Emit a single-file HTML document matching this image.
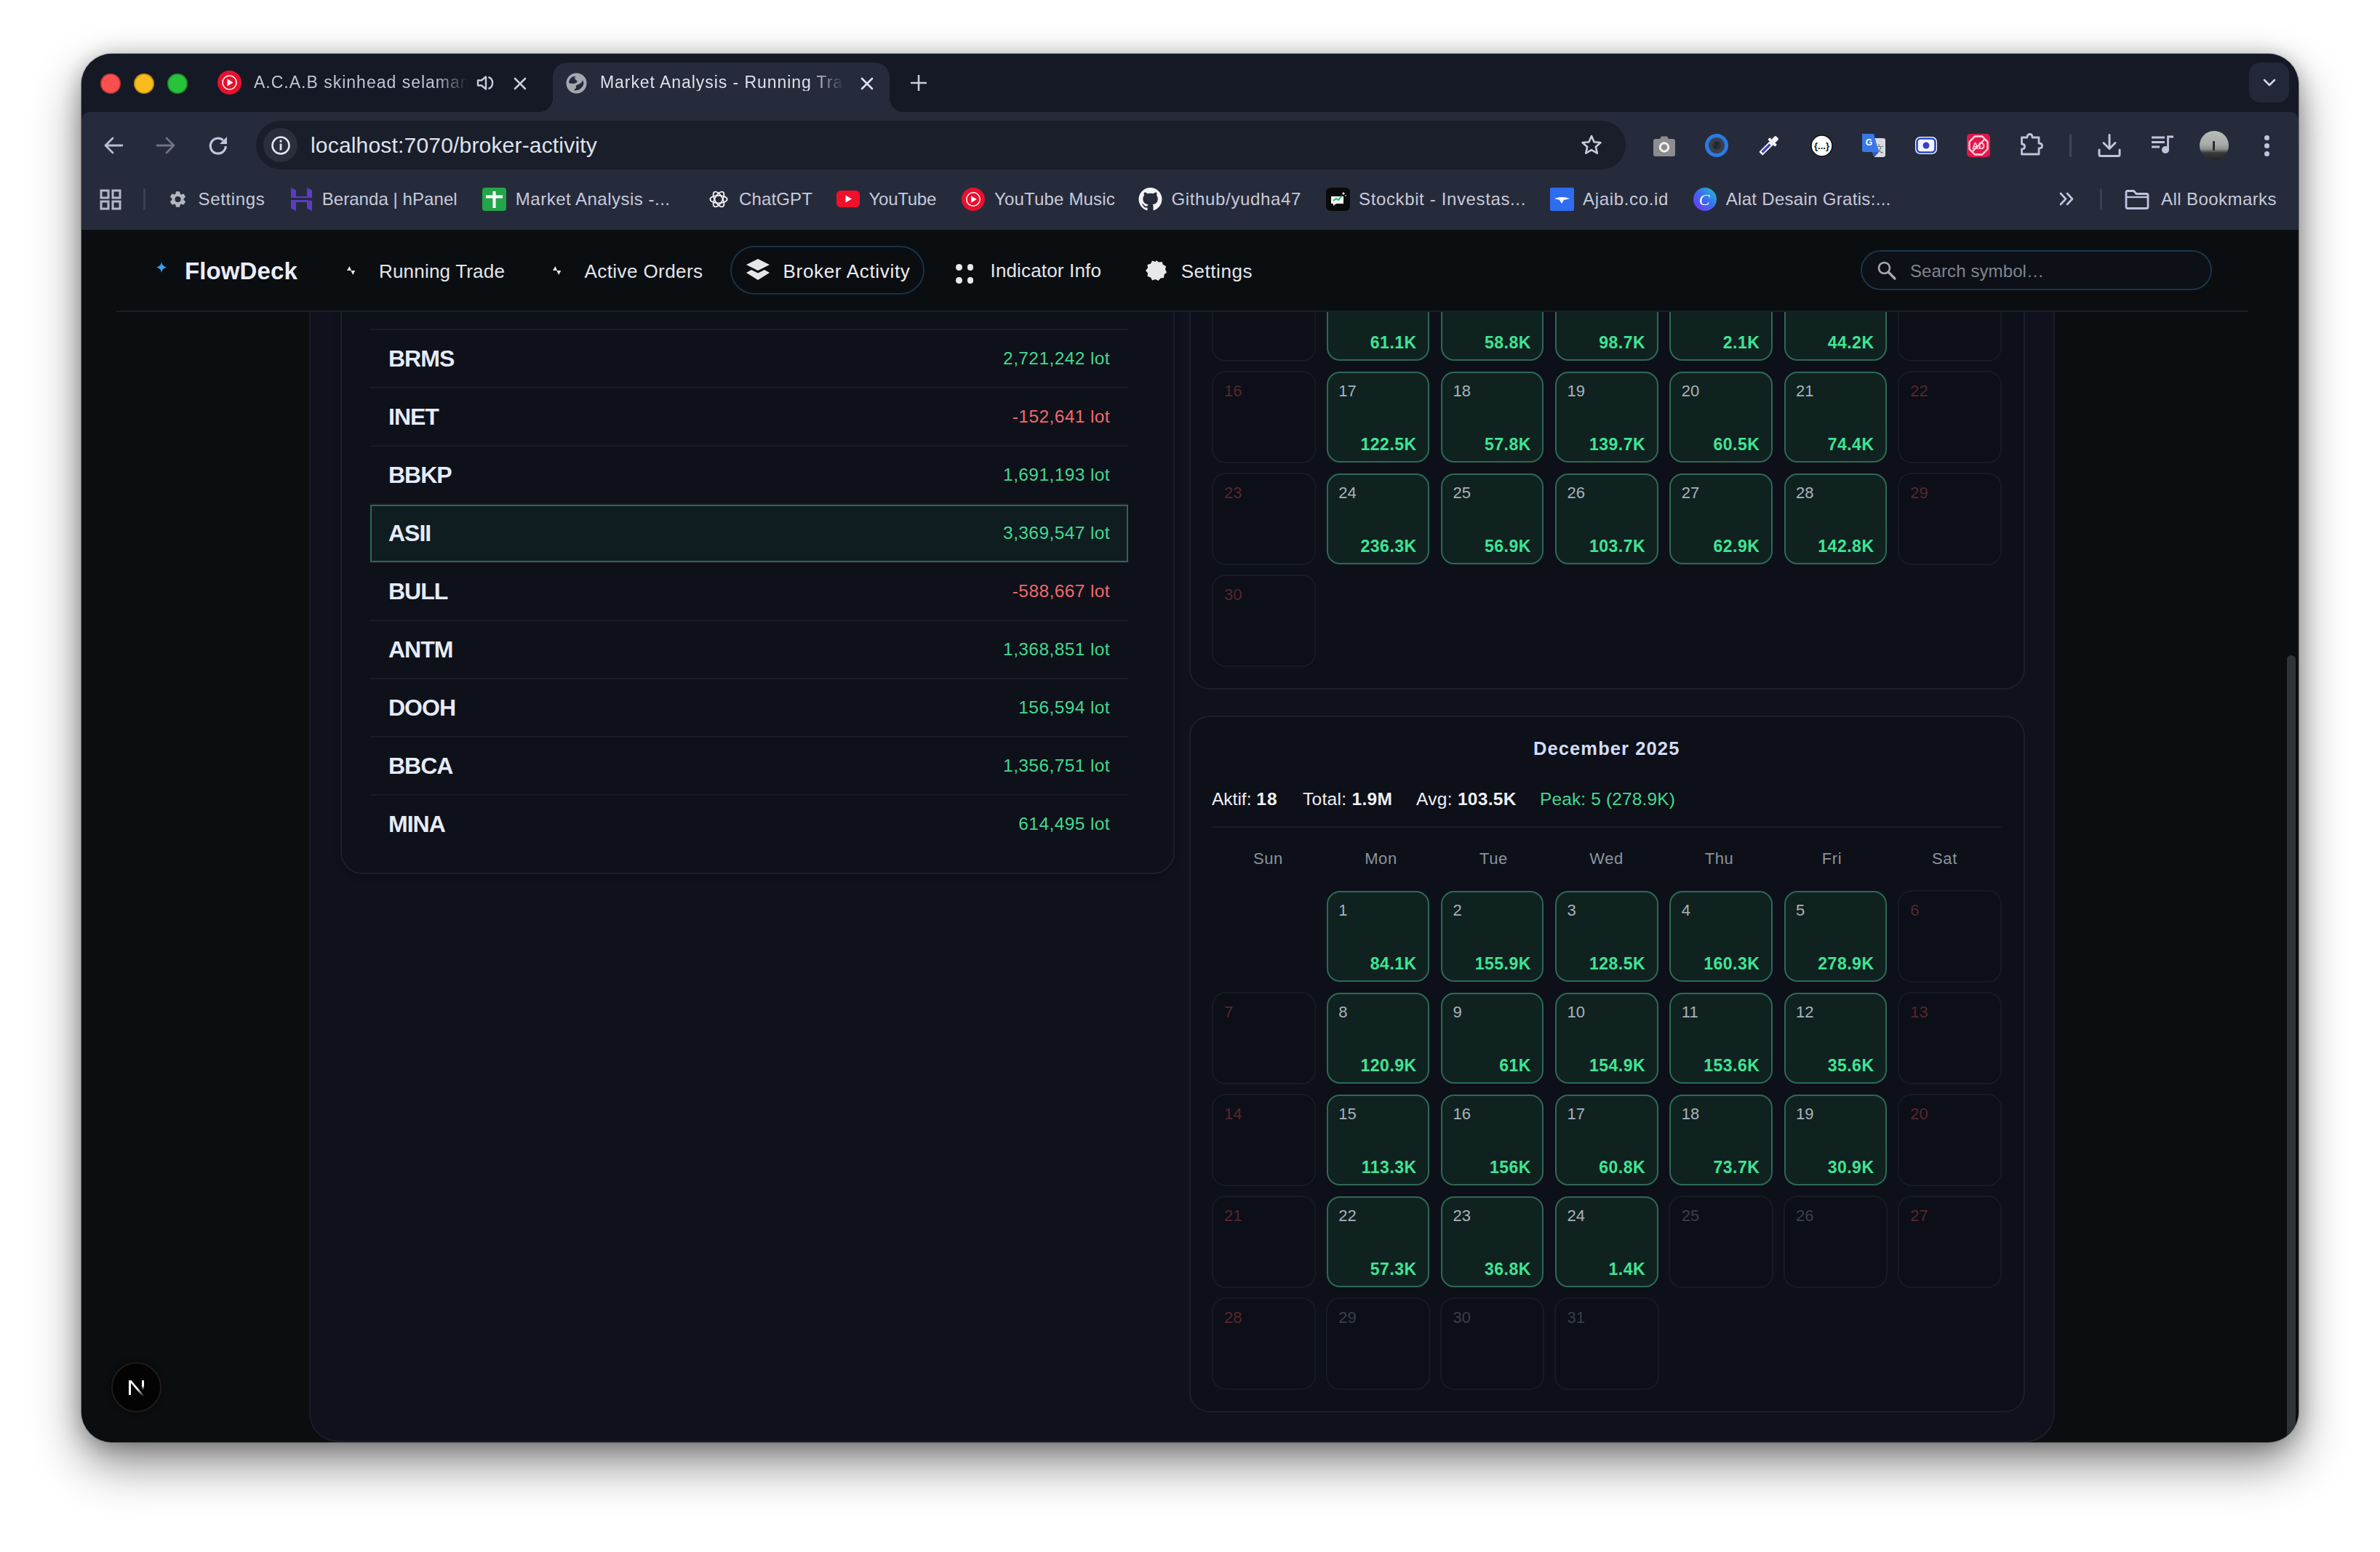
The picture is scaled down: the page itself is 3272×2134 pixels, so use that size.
<!DOCTYPE html>
<html><head><meta charset="utf-8">
<style>
*{box-sizing:border-box;margin:0;padding:0}
html,body{width:3272px;height:2134px;background:#fff;overflow:hidden;font-family:"Liberation Sans",sans-serif}
.win{position:absolute;left:112px;top:74px;width:3048px;height:1909px;border-radius:42px;overflow:hidden;background:#0b0e11;
 box-shadow:0 30px 66px rgba(0,0,0,.46),0 4px 30px rgba(0,0,0,.27),0 0 0 1px rgba(0,0,0,.3)}
.in{position:absolute;left:-112px;top:-74px;width:3272px;height:2134px}
.a{position:absolute}
.t{position:absolute;white-space:nowrap;line-height:1}
/* chrome */
.tabstrip{left:112px;top:74px;width:3048px;height:100px;background:#141925}
.toolbar{left:112px;top:154px;width:3048px;height:162px;background:#262b3b;border-radius:12px 12px 0 0}
.page{left:112px;top:316px;width:3048px;height:1667px;background:#0b0e11}
.chrtxt{color:#c6cadb;font-size:24px}
</style></head><body>
<div class="win"><div class="in">
 <div class="a tabstrip"></div>
 <div class="a toolbar"></div>
 <div class="a page"></div>
 <!--CHROME--> <!-- traffic lights -->
 <div class="a" style="left:138px;top:101px;width:28px;height:28px;border-radius:50%;background:#fe4f4f;box-shadow:inset 0 0 0 1.5px rgba(0,0,0,.3)"></div>
 <div class="a" style="left:184px;top:101px;width:28px;height:28px;border-radius:50%;background:#f8bd1c;box-shadow:inset 0 0 0 1.5px rgba(0,0,0,.3)"></div>
 <div class="a" style="left:230px;top:101px;width:28px;height:28px;border-radius:50%;background:#27c33a;box-shadow:inset 0 0 0 1.5px rgba(0,0,0,.3)"></div>
 <!-- tab 1 -->
 <svg class="a" style="left:299px;top:97px" width="33" height="33" viewBox="0 0 33 33"><circle cx="16.5" cy="16.5" r="16.5" fill="#e8112d"/><circle cx="16.5" cy="16.5" r="9.5" fill="none" stroke="#fff" stroke-width="1.6"/><path d="M13.5 11.5 L21.5 16.5 L13.5 21.5 Z" fill="#fff"/></svg>
 <div class="t" style="left:349px;top:102px;font-size:23px;color:#c0c5d8;letter-spacing:1px;width:300px;overflow:hidden;-webkit-mask-image:linear-gradient(90deg,#000 250px,transparent 295px)">A.C.A.B skinhead selaman</div>
 <svg class="a" style="left:655px;top:102px" width="26" height="24" viewBox="0 0 26 24"><path d="M2 8.5 H7 L13 3.5 V20.5 L7 15.5 H2 Z" fill="none" stroke="#c6cadb" stroke-width="2.4" stroke-linejoin="round"/><path d="M16.5 4 A8.5 8.5 0 0 1 16.5 20" fill="none" stroke="#c6cadb" stroke-width="2.4"/></svg>
 <svg class="a" style="left:706px;top:106px" width="18" height="18" viewBox="0 0 18 18"><path d="M2 2 L16 16 M16 2 L2 16" stroke="#c6cadb" stroke-width="2.6" stroke-linecap="round"/></svg>
 <!-- active tab -->
 <div class="a" style="left:760px;top:86px;width:463px;height:70px;background:#262b3b;border-radius:20px 20px 0 0"></div>
 <div class="a" style="left:740px;top:134px;width:20px;height:20px;background:radial-gradient(circle at 0 0,transparent 20px,#262b3b 20.6px)"></div>
 <div class="a" style="left:1223px;top:134px;width:20px;height:20px;background:radial-gradient(circle at 100% 0,transparent 20px,#262b3b 20.6px)"></div>
 <svg class="a" style="left:778px;top:100px" width="29" height="29" viewBox="0 0 29 29"><circle cx="14.5" cy="14.5" r="14" fill="#a3a7b0"/><path d="M4 14 Q4 6 13 4.5 Q11 8 14 10 Q17 12 14 14 Q10 16 4 14Z" fill="#262b3b"/><path d="M11 24.5 Q20 25 24 17 Q25 13 23 10.5 Q21 15 17 16 Q13 17 14 21 Q12 22 11 24.5Z" fill="#262b3b"/></svg>
 <div class="t" style="left:825px;top:102px;font-size:23px;color:#dde0ea;letter-spacing:.94px;width:340px;overflow:hidden;-webkit-mask-image:linear-gradient(90deg,#000 290px,transparent 336px)">Market Analysis - Running Trade</div>
 <svg class="a" style="left:1183px;top:106px" width="18" height="18" viewBox="0 0 18 18"><path d="M2 2 L16 16 M16 2 L2 16" stroke="#dde0ea" stroke-width="2.6" stroke-linecap="round"/></svg>
 <svg class="a" style="left:1252px;top:103px" width="22" height="22" viewBox="0 0 22 22"><path d="M11 1 V21 M1 11 H21" stroke="#c6cadb" stroke-width="2.6" stroke-linecap="round"/></svg>
 <!-- tab dropdown -->
 <div class="a" style="left:3092px;top:86px;width:55px;height:55px;border-radius:15px;background:#232838"></div>
 <svg class="a" style="left:3110px;top:107px" width="20" height="14" viewBox="0 0 20 14"><path d="M3 3 L10 10 L17 3" fill="none" stroke="#d0d3de" stroke-width="2.6" stroke-linecap="round" stroke-linejoin="round"/></svg>

 <!-- toolbar nav -->
 <svg class="a" style="left:142px;top:186px" width="28" height="28" viewBox="0 0 28 28"><path d="M26 14 H3 M13 4 L3 14 L13 24" fill="none" stroke="#b9bed0" stroke-width="2.8" stroke-linecap="round" stroke-linejoin="round"/></svg>
 <svg class="a" style="left:214px;top:186px" width="28" height="28" viewBox="0 0 28 28"><path d="M2 14 H25 M15 4 L25 14 L15 24" fill="none" stroke="#6e7385" stroke-width="2.8" stroke-linecap="round" stroke-linejoin="round"/></svg>
 <svg class="a" style="left:286px;top:186px" width="28" height="28" viewBox="0 0 28 28"><path d="M24.3 15 A10.5 10.5 0 1 1 20.8 6.8" fill="none" stroke="#c0c4dc" stroke-width="3.2"/><path d="M26 2 V12 H16 Z" fill="#c0c4dc"/></svg>
 <div class="a" style="left:352px;top:166px;width:1883px;height:67px;border-radius:34px;background:#1a1e2b"></div>
 <div class="a" style="left:362px;top:176px;width:47px;height:47px;border-radius:50%;background:#2a2f3e"></div>
 <svg class="a" style="left:372px;top:186px" width="28" height="28" viewBox="0 0 28 28"><circle cx="14" cy="14" r="11.5" fill="none" stroke="#e3e5ee" stroke-width="2.6"/><rect x="12.6" y="11.5" width="2.8" height="9" fill="#e3e5ee"/><circle cx="14" cy="8" r="1.7" fill="#e3e5ee"/></svg>
 <div class="t" style="left:427px;top:184.6px;font-size:30px;color:#dfe2ec;letter-spacing:.18px">localhost:7070/broker-activity</div>
 <svg class="a" style="left:2172px;top:184px" width="32" height="32" viewBox="0 0 32 32"><path d="M16 3 L19.6 11.2 L28.5 12 L21.8 17.9 L23.8 26.7 L16 22.1 L8.2 26.7 L10.2 17.9 L3.5 12 L12.4 11.2 Z" fill="none" stroke="#c6cadb" stroke-width="2.6" stroke-linejoin="round"/></svg>
 <!-- extensions -->
 <svg class="a" style="left:2273px;top:186px" width="30" height="29" viewBox="0 0 30 29"><path d="M9 5 L11 1.5 H19 L21 5 H27 Q30 5 30 8 V26 Q30 29 27 29 H3 Q0 29 0 26 V8 Q0 5 3 5 Z" fill="#8d8d8f"/><circle cx="15" cy="16.5" r="7.2" fill="#f2f2f2"/><circle cx="15" cy="16.5" r="4.2" fill="#8d8d8f"/></svg>
 <svg class="a" style="left:2344px;top:184px" width="32" height="32" viewBox="0 0 32 32"><circle cx="16" cy="16" r="16" fill="#2c79e6"/><circle cx="16" cy="16" r="11" fill="#3a4049"/><circle cx="16" cy="16" r="6" fill="#2b3037"/><path d="M16 11 V16 L13 19" stroke="#1a1d22" stroke-width="1.5" fill="none"/></svg>
 <svg class="a" style="left:2416px;top:184px" width="32" height="32" viewBox="0 0 32 32"><g transform="rotate(45 16 16)"><rect x="12.5" y="11" width="7" height="21" rx="1" fill="#f4f4f8"/><rect x="14.3" y="14" width="3.4" height="15.5" fill="#3b3fb8"/><rect x="9" y="7.5" width="14" height="4" rx="1" fill="#f4f4f8"/><rect x="12.5" y="0" width="7" height="8" rx="2" fill="#f4f4f8"/></g></svg>
 <svg class="a" style="left:2489px;top:185px" width="31" height="31" viewBox="0 0 31 31"><circle cx="15.5" cy="15.5" r="14.5" fill="#fff" stroke="#111" stroke-width="1.6"/><text x="15.5" y="20" font-family="Liberation Sans" font-size="13" font-weight="bold" text-anchor="middle" fill="#111">{...}</text></svg>
 <svg class="a" style="left:2560px;top:184px" width="33" height="32" viewBox="0 0 33 32"><path d="M14 6 H29 Q32 6 32 9 V29 Q32 32 29 32 H17 L14 25 Z" fill="#dadce2"/><text x="23.5" y="25" font-family="Liberation Sans" font-size="13" fill="#6b6f7a" text-anchor="middle">文</text><path d="M0 0 H16 L23 25 H2 Q0 25 0 23 Z" fill="#3b78e7"/><text x="9.5" y="16" font-family="Liberation Sans" font-size="12" font-weight="bold" fill="#fff" text-anchor="middle">G</text><path d="M14 25 L17 32 L23 25 Z" fill="#2e5dbb"/></svg>
 <svg class="a" style="left:2632px;top:187px" width="32" height="26" viewBox="0 0 32 26"><rect x="1" y="1" width="30" height="24" rx="7" fill="#fff"/><rect x="3.5" y="3.5" width="25" height="19" rx="5" fill="#f4f6ff" stroke="#2447c2" stroke-width="2.6"/><circle cx="16" cy="13" r="4.5" fill="#3b3fc4"/></svg>
 <svg class="a" style="left:2704px;top:184px" width="32" height="32" viewBox="0 0 32 32"><rect width="32" height="32" rx="5" fill="#e3174a"/><path d="M11 3.5 H21 L28.5 11 V21 L21 28.5 H11 L3.5 21 V11 Z" fill="none" stroke="#ffd6e2" stroke-width="2.3"/><text x="16" y="20.5" font-family="Liberation Sans" font-size="12" font-weight="bold" fill="#ffd6e2" text-anchor="middle">AD</text><path d="M24 8 L8 24" stroke="#ffd6e2" stroke-width="2.3"/></svg>
 <svg class="a" style="left:2777px;top:182px" width="34" height="32" viewBox="0 0 34 32"><path d="M2.5 7 H10 Q10 2.5 13.5 2.5 Q17 2.5 17 7 H26 V15 Q30.5 15 30.5 18.5 Q30.5 22 26 22 V30 H2.5 V23 Q6.5 23 6.5 19.5 Q6.5 16 2.5 16 Z" fill="none" stroke="#bfc3dc" stroke-width="2.8" stroke-linejoin="round"/></svg>
 <div class="a" style="left:2845px;top:184px;width:3px;height:32px;background:#3e4456;border-radius:2px"></div>
 <svg class="a" style="left:2884px;top:184px" width="32" height="32" viewBox="0 0 32 32"><path d="M16 1.5 V20 M8 12.5 L16 20.5 L24 12.5" fill="none" stroke="#c0c4dc" stroke-width="3" stroke-linecap="round" stroke-linejoin="round"/><path d="M2 22 V28.5 Q2 30.5 4 30.5 H28 Q30 30.5 30 28.5 V22" fill="none" stroke="#c0c4dc" stroke-width="3" stroke-linecap="round"/></svg>
 <svg class="a" style="left:2957px;top:186px" width="32" height="26" viewBox="0 0 32 26"><path d="M1 3 H19 M1 9.5 H19 M1 16 H12" stroke="#c0c4dc" stroke-width="2.8"/><path d="M23.5 20 V2 H31" stroke="#c0c4dc" stroke-width="2.8" fill="none"/><circle cx="20" cy="20" r="5" fill="#c0c4dc"/></svg>
 <div class="a" style="left:3024px;top:180px;width:40px;height:40px;border-radius:50%;background:linear-gradient(180deg,#b9bdba 0%,#a7aca9 45%,#8e9390 62%,#3a3c3b 75%,#222423 100%)"></div>
 <div class="a" style="left:3042px;top:194px;width:3px;height:13px;background:#2a2a2a;border-radius:1px"></div>
 <div class="a" style="left:3112.5px;top:185.5px;width:7px;height:7px;border-radius:50%;background:#c0c4dc"></div>
 <div class="a" style="left:3112.5px;top:196.5px;width:7px;height:7px;border-radius:50%;background:#c0c4dc"></div>
 <div class="a" style="left:3112.5px;top:208px;width:7px;height:7px;border-radius:50%;background:#c0c4dc"></div>

 <!-- bookmarks -->
 <svg class="a" style="left:137px;top:260px" width="30" height="29" viewBox="0 0 30 29"><path d="M2 2 H12 V12 H2 Z M18 2 H28 V12 H18 Z M2 17 H12 V27 H2 Z M18 17 H28 V27 H18 Z" fill="none" stroke="#b3b7c6" stroke-width="3"/></svg>
 <div class="a" style="left:196.5px;top:259px;width:3px;height:30px;background:#3a4052;border-radius:2px"></div>
 <svg class="a" style="left:231px;top:260px" width="27" height="28" viewBox="0 0 24 24"><path fill="#b3b6c0" d="M19.14 12.94c.04-.3.06-.61.06-.94 0-.32-.02-.64-.07-.94l2.03-1.58a.49.49 0 0 0 .12-.61l-1.92-3.32a.49.49 0 0 0-.59-.22l-2.39.96c-.5-.38-1.03-.7-1.62-.94l-.36-2.54a.48.48 0 0 0-.48-.41h-3.84c-.24 0-.43.17-.47.41l-.36 2.54c-.59.24-1.13.57-1.62.94l-2.39-.96a.48.48 0 0 0-.59.22L2.74 8.87a.47.47 0 0 0 .12.61l2.03 1.58c-.05.3-.09.63-.09.94s.02.64.07.94l-2.03 1.58a.49.49 0 0 0-.12.61l1.92 3.32c.12.22.37.29.59.22l2.39-.96c.5.38 1.03.7 1.62.94l.36 2.54c.05.24.24.41.48.41h3.84c.24 0 .44-.17.47-.41l.36-2.54c.59-.24 1.13-.56 1.62-.94l2.39.96c.22.08.47 0 .59-.22l1.92-3.32c.12-.22.07-.47-.12-.61l-2.01-1.58zM12 15.6A3.6 3.6 0 1 1 12 8.4a3.6 3.6 0 0 1 0 7.2z"/></svg>
 <div class="t chrtxt" style="left:272.5px;top:261.7px;letter-spacing:.66px">Settings</div>
 <svg class="a" style="left:400px;top:258px" width="29" height="32" viewBox="0 0 29 32"><path d="M0 0 L7 3.5 V12 L22 12 V0 L29 3.5 V14 L7 14 H0 Z M0 17 H22 L29 18 V32 L22 28.5 V20 L7 20 V32 L0 28.5 Z" fill="#5b3cc4"/></svg>
 <div class="t chrtxt" style="left:442.7px;top:261.7px;letter-spacing:.06px">Beranda | hPanel</div>
 <svg class="a" style="left:663px;top:258px" width="33" height="32" viewBox="0 0 33 32"><rect width="33" height="32" rx="4" fill="#23a549"/><path d="M16.5 5 V28 M5 12.5 H28" stroke="#fff" stroke-width="4"/></svg>
 <div class="t chrtxt" style="left:708.8px;top:261.7px;letter-spacing:.5px">Market Analysis -...</div>
 <svg class="a" style="left:974px;top:260px" width="28" height="28" viewBox="0 0 24 24"><g fill="none" stroke="#f2f2f2" stroke-width="1.5"><ellipse cx="12" cy="12" rx="10" ry="4.5"/><ellipse cx="12" cy="12" rx="10" ry="4.5" transform="rotate(60 12 12)"/><ellipse cx="12" cy="12" rx="10" ry="4.5" transform="rotate(120 12 12)"/></g></svg>
 <div class="t chrtxt" style="left:1016px;top:261.7px;letter-spacing:.14px">ChatGPT</div>
 <svg class="a" style="left:1150px;top:262px" width="32" height="23" viewBox="0 0 32 23"><rect width="32" height="23" rx="5.5" fill="#f0102b"/><path d="M12.5 6.5 L21 11.5 L12.5 16.5 Z" fill="#fff"/></svg>
 <div class="t chrtxt" style="left:1194.5px;top:261.7px;letter-spacing:-.26px">YouTube</div>
 <svg class="a" style="left:1322px;top:258px" width="32" height="32" viewBox="0 0 33 33"><circle cx="16.5" cy="16.5" r="16.5" fill="#e8112d"/><circle cx="16.5" cy="16.5" r="9.5" fill="none" stroke="#fff" stroke-width="1.6"/><path d="M13.5 11.5 L21.5 16.5 L13.5 21.5 Z" fill="#fff"/></svg>
 <div class="t chrtxt" style="left:1367px;top:261.7px;letter-spacing:.18px">YouTube Music</div>
 <svg class="a" style="left:1565px;top:258px" width="33" height="32" viewBox="0 0 16 16"><path fill="#f2f2f2" d="M8 0C3.58 0 0 3.58 0 8c0 3.54 2.29 6.53 5.47 7.59.4.07.55-.17.55-.38 0-.19-.01-.82-.01-1.49-2.01.37-2.53-.49-2.69-.94-.09-.23-.48-.94-.82-1.13-.28-.15-.68-.52-.01-.53.63-.01 1.08.58 1.23.82.72 1.21 1.87.87 2.33.66.07-.52.28-.87.51-1.07-1.78-.2-3.64-.89-3.64-3.95 0-.87.31-1.59.82-2.15-.08-.2-.36-1.02.08-2.12 0 0 .67-.21 2.2.82.64-.18 1.32-.27 2-.27.68 0 1.36.09 2 .27 1.53-1.04 2.2-.82 2.2-.82.44 1.1.16 1.92.08 2.12.51.56.82 1.27.82 2.15 0 3.07-1.87 3.75-3.65 3.95.29.25.54.73.54 1.48 0 1.07-.01 1.93-.01 2.2 0 .21.15.46.55.38A8.013 8.013 0 0 0 16 8c0-4.42-3.58-8-8-8z"/></svg>
 <div class="t chrtxt" style="left:1610.5px;top:261.7px;letter-spacing:.65px">Github/yudha47</div>
 <svg class="a" style="left:1823px;top:258px" width="33" height="32" viewBox="0 0 33 32"><rect width="33" height="32" rx="6" fill="#0a0a0a"/><path d="M7 12 H24 V22 H14 L10 25 V22 H7 Z" fill="#f4f4f4"/><path d="M10 18 L14 15 L17 17 L22 11" stroke="#19b36b" stroke-width="1.8" fill="none"/><circle cx="24" cy="8" r="1.5" fill="#fff"/><circle cx="27" cy="11" r="1.2" fill="#2ad"/></svg>
 <div class="t chrtxt" style="left:1868px;top:261.7px;letter-spacing:.63px">Stockbit - Investas...</div>
 <svg class="a" style="left:2131px;top:258px" width="33" height="32" viewBox="0 0 33 32"><rect width="33" height="32" rx="2" fill="#2f6df0"/><path d="M6 15 Q16 11 27 15 Q16 19 6 15 Z" fill="#fff"/><path d="M13 17 L16 22 L19 17" fill="#fff"/></svg>
 <div class="t chrtxt" style="left:2176px;top:261.7px;letter-spacing:.66px">Ajaib.co.id</div>
 <svg class="a" style="left:2328px;top:258px" width="32" height="32" viewBox="0 0 32 32"><defs><linearGradient id="cg" x1="0" y1="1" x2="1" y2="0"><stop offset="0" stop-color="#7b2ff2"/><stop offset=".5" stop-color="#3a6cf0"/><stop offset="1" stop-color="#1fc3d3"/></linearGradient></defs><circle cx="16" cy="16" r="16" fill="url(#cg)"/><text x="15" y="24" font-family="Liberation Serif" font-style="italic" font-size="22" fill="#fff" text-anchor="middle">C</text></svg>
 <div class="t chrtxt" style="left:2372.7px;top:261.7px;letter-spacing:.31px">Alat Desain Gratis:...</div>
 <svg class="a" style="left:2831px;top:264px" width="21" height="19" viewBox="0 0 21 19"><path d="M2 2 L9 9.5 L2 17 M11 2 L18 9.5 L11 17" fill="none" stroke="#c0c4dc" stroke-width="2.6" stroke-linecap="round" stroke-linejoin="round"/></svg>
 <div class="a" style="left:2887px;top:259px;width:3px;height:30px;background:#3a4052;border-radius:2px"></div>
 <svg class="a" style="left:2921px;top:261px" width="34" height="27" viewBox="0 0 34 27"><path d="M2 3.5 Q2 1.5 4 1.5 H12.5 L16 5.5 H30 Q32 5.5 32 7.5 V23.5 Q32 25.5 30 25.5 H4 Q2 25.5 2 23.5 Z" fill="none" stroke="#c0c4dc" stroke-width="2.8" stroke-linejoin="round"/><path d="M2 10 H32" stroke="#c0c4dc" stroke-width="2.4"/></svg>
 <div class="t chrtxt" style="left:2971px;top:261.7px;letter-spacing:.43px">All Bookmarks</div>
<!--/CHROME-->
 <!--PAGE--><div class="a" style="left:160px;top:427px;width:2930px;height:2px;background:#1a1f2b"></div>
<svg class="a" style="left:215px;top:360px" width="14" height="15" viewBox="0 0 14 15"><path d="M7 0 Q7.8 6.2 14 7.5 Q7.8 8.8 7 15 Q6.2 8.8 0 7.5 Q6.2 6.2 7 0Z" fill="#3b9ff0"/></svg>
<div class="t" style="left:254px;top:356.1px;font-size:33px;font-weight:bold;color:#e9edfb;letter-spacing:.1px">FlowDeck</div>
<svg class="a" style="left:476px;top:365px" width="13" height="14" viewBox="0 0 13 14"><path d="M1 7 L4.5 1 L7 7 Z M6.2 7 L12.3 7 L9.2 13 Z" fill="#e4e6ec"/></svg>
<div class="t" style="left:521px;top:360.0px;font-size:26px;color:#e4e6ec;letter-spacing:.19px">Running Trade</div>
<svg class="a" style="left:759px;top:365px" width="13" height="14" viewBox="0 0 13 14"><path d="M1 7 L4.5 1 L7 7 Z M6.2 7 L12.3 7 L9.2 13 Z" fill="#e4e6ec"/></svg>
<div class="t" style="left:803.5px;top:360.0px;font-size:26px;color:#e4e6ec;letter-spacing:.42px">Active Orders</div>
<div class="a" style="left:1004px;top:338px;width:267px;height:67px;border-radius:34px;border:2px solid #1b3144;background:#0b0e11"></div>
<svg class="a" style="left:1025px;top:356px" width="34" height="30" viewBox="0 0 34 30"><path d="M17 0 L33 8 L17 16 L1 8 Z" fill="#e6e6e8"/><path d="M8 15 L17 19.5 L26 15 L33 19 L17 29 L1 19 Z" fill="#e6e6e8"/></svg>
<div class="t" style="left:1076.5px;top:360.0px;font-size:26px;color:#eceef3;letter-spacing:.69px">Broker Activity</div>
<div class="a" style="left:1314.2px;top:363.0px;width:8.6px;height:8.6px;border-radius:50%;background:#e8e9ee"></div>
<div class="a" style="left:1314.2px;top:381.1px;width:8.6px;height:8.6px;border-radius:50%;background:#e8e9ee"></div>
<div class="a" style="left:1329.5px;top:363.0px;width:8.6px;height:8.6px;border-radius:50%;background:#e8e9ee"></div>
<div class="a" style="left:1329.5px;top:381.1px;width:8.6px;height:8.6px;border-radius:50%;background:#e8e9ee"></div>
<div class="t" style="left:1361.5px;top:359.0px;font-size:26px;color:#e4e6ec;letter-spacing:.16px">Indicator Info</div>
<svg class="a" style="left:1574px;top:357px" width="31" height="30" viewBox="0 0 31 30"><path d="M15.5 1 L19 3.5 L23.5 3 L25 7 L29 9 L28 13.5 L30 17.5 L26.5 20.5 L26 25 L21.5 25.5 L18.5 29 L14.5 27 L10 28.5 L8 24.5 L3.5 23 L4 18.5 L1 15 L4 11.5 L3.5 7 L8 5.5 L10 1.5 L14.5 3 Z" fill="#e8e8ea"/></svg>
<div class="t" style="left:1623.7px;top:360.0px;font-size:26px;color:#e4e6ec;letter-spacing:.54px">Settings</div>
<div class="a" style="left:2558px;top:344px;width:483px;height:55px;border-radius:28px;border:2px solid #1c3448;background:#0d1017"></div>
<svg class="a" style="left:2580px;top:358px" width="28" height="28" viewBox="0 0 28 28"><circle cx="10.5" cy="10.5" r="7.5" fill="none" stroke="#a6aab5" stroke-width="2.6"/><path d="M16 16 L25 25" stroke="#a6aab5" stroke-width="3.2" stroke-linecap="round"/></svg>
<div class="t" style="left:2626px;top:360.7px;font-size:24px;color:#80858f;letter-spacing:.1px">Search symbol…</div>
<div class="a" style="left:112px;top:429px;width:3048px;height:1554px;overflow:hidden">
<div class="a" style="left:-112px;top:-429px;width:3272px;height:2134px">
<div class="a" style="left:425px;top:100px;width:2400px;height:1883px;background:#0f121c;border:2px solid #1a1e28;border-radius:40px"></div>
<div class="a" style="left:468px;top:120px;width:1147px;height:1082px;background:#0e1119;border:2px solid #1b1f2a;border-radius:30px;box-shadow:0 4px 10px rgba(0,0,0,.25)"></div>
<div class="a" style="left:508px;top:452px;width:1043px;height:2px;background:#181c26"></div>
<div class="a" style="left:508px;top:532px;width:1043px;height:2px;background:#181c26"></div>
<div class="a" style="left:508px;top:612px;width:1043px;height:2px;background:#181c26"></div>
<div class="a" style="left:508px;top:692px;width:1043px;height:2px;background:#181c26"></div>
<div class="a" style="left:508px;top:772px;width:1043px;height:2px;background:#181c26"></div>
<div class="a" style="left:508px;top:852px;width:1043px;height:2px;background:#181c26"></div>
<div class="a" style="left:508px;top:932px;width:1043px;height:2px;background:#181c26"></div>
<div class="a" style="left:508px;top:1012px;width:1043px;height:2px;background:#181c26"></div>
<div class="a" style="left:508px;top:1092px;width:1043px;height:2px;background:#181c26"></div>
<div class="t" style="left:534px;top:477.1px;font-size:32px;font-weight:bold;color:#e6ebf8;letter-spacing:-1px">BRMS</div>
<div class="t" style="right:1746px;top:480.8px;font-size:24.5px;color:#42d890;letter-spacing:.4px">2,721,242 lot</div>
<div class="t" style="left:534px;top:557.1px;font-size:32px;font-weight:bold;color:#e6ebf8;letter-spacing:-1px">INET</div>
<div class="t" style="right:1746px;top:560.8px;font-size:24.5px;color:#f2686d;letter-spacing:.4px">-152,641 lot</div>
<div class="t" style="left:534px;top:637.1px;font-size:32px;font-weight:bold;color:#e6ebf8;letter-spacing:-1px">BBKP</div>
<div class="t" style="right:1746px;top:640.8px;font-size:24.5px;color:#42d890;letter-spacing:.4px">1,691,193 lot</div>
<div class="a" style="left:509px;top:694px;width:1042px;height:79px;border:2px solid #2c6654;background:#0f1d21"></div>
<div class="t" style="left:534px;top:717.1px;font-size:32px;font-weight:bold;color:#e6ebf8;letter-spacing:-1px">ASII</div>
<div class="t" style="right:1746px;top:720.8px;font-size:24.5px;color:#42d890;letter-spacing:.4px">3,369,547 lot</div>
<div class="t" style="left:534px;top:797.1px;font-size:32px;font-weight:bold;color:#e6ebf8;letter-spacing:-1px">BULL</div>
<div class="t" style="right:1746px;top:800.8px;font-size:24.5px;color:#f2686d;letter-spacing:.4px">-588,667 lot</div>
<div class="t" style="left:534px;top:877.1px;font-size:32px;font-weight:bold;color:#e6ebf8;letter-spacing:-1px">ANTM</div>
<div class="t" style="right:1746px;top:880.8px;font-size:24.5px;color:#42d890;letter-spacing:.4px">1,368,851 lot</div>
<div class="t" style="left:534px;top:957.1px;font-size:32px;font-weight:bold;color:#e6ebf8;letter-spacing:-1px">DOOH</div>
<div class="t" style="right:1746px;top:960.8px;font-size:24.5px;color:#42d890;letter-spacing:.4px">156,594 lot</div>
<div class="t" style="left:534px;top:1037.1px;font-size:32px;font-weight:bold;color:#e6ebf8;letter-spacing:-1px">BBCA</div>
<div class="t" style="right:1746px;top:1040.8px;font-size:24.5px;color:#42d890;letter-spacing:.4px">1,356,751 lot</div>
<div class="t" style="left:534px;top:1117.1px;font-size:32px;font-weight:bold;color:#e6ebf8;letter-spacing:-1px">MINA</div>
<div class="t" style="right:1746px;top:1120.8px;font-size:24.5px;color:#42d890;letter-spacing:.4px">614,495 lot</div>
<div class="a" style="left:1635px;top:-150px;width:1148.5px;height:1097.5px;background:#0d1018;border:2px solid #1b1f2a;border-radius:28px"></div>
<div class="a" style="left:2608.7px;top:90px;width:143.5px;height:127px;border-radius:19px;border:2px solid #161a23;background:#0c0f17"></div>
<div class="t" style="left:2626.2px;top:106.6px;font-size:22px;color:#57272d">1</div>
<div class="a" style="left:1665.5px;top:230px;width:143.5px;height:127px;border-radius:19px;border:2px solid #161a23;background:#0c0f17"></div>
<div class="t" style="left:1683.0px;top:246.6px;font-size:22px;color:#57272d">2</div>
<div class="a" style="left:1823.7px;top:231px;width:141.5px;height:125px;border-radius:18px;border:2.5px solid #2c6956;background:#10221f"></div>
<div class="t" style="left:1840.2px;top:246.6px;font-size:22px;color:#a9b2bb">3</div>
<div class="t" style="right:1324.3px;top:319.5px;font-size:23px;font-weight:bold;color:#3fe495;letter-spacing:.5px">1K</div>
<div class="a" style="left:1980.9px;top:231px;width:141.5px;height:125px;border-radius:18px;border:2.5px solid #2c6956;background:#10221f"></div>
<div class="t" style="left:1997.4px;top:246.6px;font-size:22px;color:#a9b2bb">4</div>
<div class="t" style="right:1167.1px;top:319.5px;font-size:23px;font-weight:bold;color:#3fe495;letter-spacing:.5px">1K</div>
<div class="a" style="left:2138.1px;top:231px;width:141.5px;height:125px;border-radius:18px;border:2.5px solid #2c6956;background:#10221f"></div>
<div class="t" style="left:2154.6px;top:246.6px;font-size:22px;color:#a9b2bb">5</div>
<div class="t" style="right:1009.9px;top:319.5px;font-size:23px;font-weight:bold;color:#3fe495;letter-spacing:.5px">1K</div>
<div class="a" style="left:2295.3px;top:231px;width:141.5px;height:125px;border-radius:18px;border:2.5px solid #2c6956;background:#10221f"></div>
<div class="t" style="left:2311.8px;top:246.6px;font-size:22px;color:#a9b2bb">6</div>
<div class="t" style="right:852.7px;top:319.5px;font-size:23px;font-weight:bold;color:#3fe495;letter-spacing:.5px">1K</div>
<div class="a" style="left:2452.5px;top:231px;width:141.5px;height:125px;border-radius:18px;border:2.5px solid #2c6956;background:#10221f"></div>
<div class="t" style="left:2469.0px;top:246.6px;font-size:22px;color:#a9b2bb">7</div>
<div class="t" style="right:695.5px;top:319.5px;font-size:23px;font-weight:bold;color:#3fe495;letter-spacing:.5px">1K</div>
<div class="a" style="left:2608.7px;top:230px;width:143.5px;height:127px;border-radius:19px;border:2px solid #161a23;background:#0c0f17"></div>
<div class="t" style="left:2626.2px;top:246.6px;font-size:22px;color:#57272d">8</div>
<div class="a" style="left:1665.5px;top:370px;width:143.5px;height:127px;border-radius:19px;border:2px solid #161a23;background:#0c0f17"></div>
<div class="t" style="left:1683.0px;top:386.6px;font-size:22px;color:#57272d">9</div>
<div class="a" style="left:1823.7px;top:371px;width:141.5px;height:125px;border-radius:18px;border:2.5px solid #2c6956;background:#10221f"></div>
<div class="t" style="left:1840.2px;top:386.6px;font-size:22px;color:#a9b2bb">10</div>
<div class="t" style="right:1324.3px;top:459.5px;font-size:23px;font-weight:bold;color:#3fe495;letter-spacing:.5px">61.1K</div>
<div class="a" style="left:1980.9px;top:371px;width:141.5px;height:125px;border-radius:18px;border:2.5px solid #2c6956;background:#10221f"></div>
<div class="t" style="left:1997.4px;top:386.6px;font-size:22px;color:#a9b2bb">11</div>
<div class="t" style="right:1167.1px;top:459.5px;font-size:23px;font-weight:bold;color:#3fe495;letter-spacing:.5px">58.8K</div>
<div class="a" style="left:2138.1px;top:371px;width:141.5px;height:125px;border-radius:18px;border:2.5px solid #2c6956;background:#10221f"></div>
<div class="t" style="left:2154.6px;top:386.6px;font-size:22px;color:#a9b2bb">12</div>
<div class="t" style="right:1009.9px;top:459.5px;font-size:23px;font-weight:bold;color:#3fe495;letter-spacing:.5px">98.7K</div>
<div class="a" style="left:2295.3px;top:371px;width:141.5px;height:125px;border-radius:18px;border:2.5px solid #2c6956;background:#10221f"></div>
<div class="t" style="left:2311.8px;top:386.6px;font-size:22px;color:#a9b2bb">13</div>
<div class="t" style="right:852.7px;top:459.5px;font-size:23px;font-weight:bold;color:#3fe495;letter-spacing:.5px">2.1K</div>
<div class="a" style="left:2452.5px;top:371px;width:141.5px;height:125px;border-radius:18px;border:2.5px solid #2c6956;background:#10221f"></div>
<div class="t" style="left:2469.0px;top:386.6px;font-size:22px;color:#a9b2bb">14</div>
<div class="t" style="right:695.5px;top:459.5px;font-size:23px;font-weight:bold;color:#3fe495;letter-spacing:.5px">44.2K</div>
<div class="a" style="left:2608.7px;top:370px;width:143.5px;height:127px;border-radius:19px;border:2px solid #161a23;background:#0c0f17"></div>
<div class="t" style="left:2626.2px;top:386.6px;font-size:22px;color:#57272d">15</div>
<div class="a" style="left:1665.5px;top:510px;width:143.5px;height:127px;border-radius:19px;border:2px solid #161a23;background:#0c0f17"></div>
<div class="t" style="left:1683.0px;top:526.6px;font-size:22px;color:#57272d">16</div>
<div class="a" style="left:1823.7px;top:511px;width:141.5px;height:125px;border-radius:18px;border:2.5px solid #2c6956;background:#10221f"></div>
<div class="t" style="left:1840.2px;top:526.6px;font-size:22px;color:#a9b2bb">17</div>
<div class="t" style="right:1324.3px;top:599.5px;font-size:23px;font-weight:bold;color:#3fe495;letter-spacing:.5px">122.5K</div>
<div class="a" style="left:1980.9px;top:511px;width:141.5px;height:125px;border-radius:18px;border:2.5px solid #2c6956;background:#10221f"></div>
<div class="t" style="left:1997.4px;top:526.6px;font-size:22px;color:#a9b2bb">18</div>
<div class="t" style="right:1167.1px;top:599.5px;font-size:23px;font-weight:bold;color:#3fe495;letter-spacing:.5px">57.8K</div>
<div class="a" style="left:2138.1px;top:511px;width:141.5px;height:125px;border-radius:18px;border:2.5px solid #2c6956;background:#10221f"></div>
<div class="t" style="left:2154.6px;top:526.6px;font-size:22px;color:#a9b2bb">19</div>
<div class="t" style="right:1009.9px;top:599.5px;font-size:23px;font-weight:bold;color:#3fe495;letter-spacing:.5px">139.7K</div>
<div class="a" style="left:2295.3px;top:511px;width:141.5px;height:125px;border-radius:18px;border:2.5px solid #2c6956;background:#10221f"></div>
<div class="t" style="left:2311.8px;top:526.6px;font-size:22px;color:#a9b2bb">20</div>
<div class="t" style="right:852.7px;top:599.5px;font-size:23px;font-weight:bold;color:#3fe495;letter-spacing:.5px">60.5K</div>
<div class="a" style="left:2452.5px;top:511px;width:141.5px;height:125px;border-radius:18px;border:2.5px solid #2c6956;background:#10221f"></div>
<div class="t" style="left:2469.0px;top:526.6px;font-size:22px;color:#a9b2bb">21</div>
<div class="t" style="right:695.5px;top:599.5px;font-size:23px;font-weight:bold;color:#3fe495;letter-spacing:.5px">74.4K</div>
<div class="a" style="left:2608.7px;top:510px;width:143.5px;height:127px;border-radius:19px;border:2px solid #161a23;background:#0c0f17"></div>
<div class="t" style="left:2626.2px;top:526.6px;font-size:22px;color:#57272d">22</div>
<div class="a" style="left:1665.5px;top:650px;width:143.5px;height:127px;border-radius:19px;border:2px solid #161a23;background:#0c0f17"></div>
<div class="t" style="left:1683.0px;top:666.6px;font-size:22px;color:#57272d">23</div>
<div class="a" style="left:1823.7px;top:651px;width:141.5px;height:125px;border-radius:18px;border:2.5px solid #2c6956;background:#10221f"></div>
<div class="t" style="left:1840.2px;top:666.6px;font-size:22px;color:#a9b2bb">24</div>
<div class="t" style="right:1324.3px;top:739.5px;font-size:23px;font-weight:bold;color:#3fe495;letter-spacing:.5px">236.3K</div>
<div class="a" style="left:1980.9px;top:651px;width:141.5px;height:125px;border-radius:18px;border:2.5px solid #2c6956;background:#10221f"></div>
<div class="t" style="left:1997.4px;top:666.6px;font-size:22px;color:#a9b2bb">25</div>
<div class="t" style="right:1167.1px;top:739.5px;font-size:23px;font-weight:bold;color:#3fe495;letter-spacing:.5px">56.9K</div>
<div class="a" style="left:2138.1px;top:651px;width:141.5px;height:125px;border-radius:18px;border:2.5px solid #2c6956;background:#10221f"></div>
<div class="t" style="left:2154.6px;top:666.6px;font-size:22px;color:#a9b2bb">26</div>
<div class="t" style="right:1009.9px;top:739.5px;font-size:23px;font-weight:bold;color:#3fe495;letter-spacing:.5px">103.7K</div>
<div class="a" style="left:2295.3px;top:651px;width:141.5px;height:125px;border-radius:18px;border:2.5px solid #2c6956;background:#10221f"></div>
<div class="t" style="left:2311.8px;top:666.6px;font-size:22px;color:#a9b2bb">27</div>
<div class="t" style="right:852.7px;top:739.5px;font-size:23px;font-weight:bold;color:#3fe495;letter-spacing:.5px">62.9K</div>
<div class="a" style="left:2452.5px;top:651px;width:141.5px;height:125px;border-radius:18px;border:2.5px solid #2c6956;background:#10221f"></div>
<div class="t" style="left:2469.0px;top:666.6px;font-size:22px;color:#a9b2bb">28</div>
<div class="t" style="right:695.5px;top:739.5px;font-size:23px;font-weight:bold;color:#3fe495;letter-spacing:.5px">142.8K</div>
<div class="a" style="left:2608.7px;top:650px;width:143.5px;height:127px;border-radius:19px;border:2px solid #161a23;background:#0c0f17"></div>
<div class="t" style="left:2626.2px;top:666.6px;font-size:22px;color:#57272d">29</div>
<div class="a" style="left:1665.5px;top:790px;width:143.5px;height:127px;border-radius:19px;border:2px solid #161a23;background:#0c0f17"></div>
<div class="t" style="left:1683.0px;top:806.6px;font-size:22px;color:#57272d">30</div>
<div class="a" style="left:1635px;top:983.5px;width:1148.5px;height:958.5px;background:#0d1018;border:2px solid #1b1f2a;border-radius:28px"></div>
<div class="t" style="left:2108px;top:1017.4px;font-size:25.5px;font-weight:bold;color:#d3dcfa;letter-spacing:1.1px">December 2025</div>
<div class="t" style="left:1666px;top:1086.7px;font-size:24.5px;color:#eef0f5">Aktif: <b style="letter-spacing:1px">18</b></div>
<div class="t" style="left:1791px;top:1086.7px;font-size:24.5px;color:#eef0f5;letter-spacing:.3px">Total: <b>1.9M</b></div>
<div class="t" style="left:1947px;top:1086.7px;font-size:24.5px;color:#eef0f5;letter-spacing:.3px">Avg: <b>103.5K</b></div>
<div class="t" style="left:2117px;top:1086.7px;font-size:24.5px;color:#45d890;letter-spacing:.13px">Peak: 5 (278.9K)</div>
<div class="a" style="left:1666px;top:1136px;width:1085px;height:2px;background:#191d27"></div>
<div class="t" style="left:1643.5px;width:200px;text-align:center;top:1170.4px;font-size:22px;color:#8994a0;letter-spacing:.6px">Sun</div>
<div class="t" style="left:1798.5px;width:200px;text-align:center;top:1170.4px;font-size:22px;color:#8994a0;letter-spacing:.6px">Mon</div>
<div class="t" style="left:1953.5px;width:200px;text-align:center;top:1170.4px;font-size:22px;color:#8994a0;letter-spacing:.6px">Tue</div>
<div class="t" style="left:2108.5px;width:200px;text-align:center;top:1170.4px;font-size:22px;color:#8994a0;letter-spacing:.6px">Wed</div>
<div class="t" style="left:2263.5px;width:200px;text-align:center;top:1170.4px;font-size:22px;color:#8994a0;letter-spacing:.6px">Thu</div>
<div class="t" style="left:2418.5px;width:200px;text-align:center;top:1170.4px;font-size:22px;color:#8994a0;letter-spacing:.6px">Fri</div>
<div class="t" style="left:2573.5px;width:200px;text-align:center;top:1170.4px;font-size:22px;color:#8994a0;letter-spacing:.6px">Sat</div>
<div class="a" style="left:1823.7px;top:1225px;width:141.5px;height:125px;border-radius:18px;border:2.5px solid #2c6956;background:#10221f"></div>
<div class="t" style="left:1840.2px;top:1240.6px;font-size:22px;color:#a9b2bb">1</div>
<div class="t" style="right:1324.3px;top:1313.5px;font-size:23px;font-weight:bold;color:#3fe495;letter-spacing:.5px">84.1K</div>
<div class="a" style="left:1980.9px;top:1225px;width:141.5px;height:125px;border-radius:18px;border:2.5px solid #2c6956;background:#10221f"></div>
<div class="t" style="left:1997.4px;top:1240.6px;font-size:22px;color:#a9b2bb">2</div>
<div class="t" style="right:1167.1px;top:1313.5px;font-size:23px;font-weight:bold;color:#3fe495;letter-spacing:.5px">155.9K</div>
<div class="a" style="left:2138.1px;top:1225px;width:141.5px;height:125px;border-radius:18px;border:2.5px solid #2c6956;background:#10221f"></div>
<div class="t" style="left:2154.6px;top:1240.6px;font-size:22px;color:#a9b2bb">3</div>
<div class="t" style="right:1009.9px;top:1313.5px;font-size:23px;font-weight:bold;color:#3fe495;letter-spacing:.5px">128.5K</div>
<div class="a" style="left:2295.3px;top:1225px;width:141.5px;height:125px;border-radius:18px;border:2.5px solid #2c6956;background:#10221f"></div>
<div class="t" style="left:2311.8px;top:1240.6px;font-size:22px;color:#a9b2bb">4</div>
<div class="t" style="right:852.7px;top:1313.5px;font-size:23px;font-weight:bold;color:#3fe495;letter-spacing:.5px">160.3K</div>
<div class="a" style="left:2452.5px;top:1225px;width:141.5px;height:125px;border-radius:18px;border:2.5px solid #2c6956;background:#10221f"></div>
<div class="t" style="left:2469.0px;top:1240.6px;font-size:22px;color:#a9b2bb">5</div>
<div class="t" style="right:695.5px;top:1313.5px;font-size:23px;font-weight:bold;color:#3fe495;letter-spacing:.5px">278.9K</div>
<div class="a" style="left:2608.7px;top:1224px;width:143.5px;height:127px;border-radius:19px;border:2px solid #161a23;background:#0c0f17"></div>
<div class="t" style="left:2626.2px;top:1240.6px;font-size:22px;color:#57272d">6</div>
<div class="a" style="left:1665.5px;top:1364px;width:143.5px;height:127px;border-radius:19px;border:2px solid #161a23;background:#0c0f17"></div>
<div class="t" style="left:1683.0px;top:1380.6px;font-size:22px;color:#57272d">7</div>
<div class="a" style="left:1823.7px;top:1365px;width:141.5px;height:125px;border-radius:18px;border:2.5px solid #2c6956;background:#10221f"></div>
<div class="t" style="left:1840.2px;top:1380.6px;font-size:22px;color:#a9b2bb">8</div>
<div class="t" style="right:1324.3px;top:1453.5px;font-size:23px;font-weight:bold;color:#3fe495;letter-spacing:.5px">120.9K</div>
<div class="a" style="left:1980.9px;top:1365px;width:141.5px;height:125px;border-radius:18px;border:2.5px solid #2c6956;background:#10221f"></div>
<div class="t" style="left:1997.4px;top:1380.6px;font-size:22px;color:#a9b2bb">9</div>
<div class="t" style="right:1167.1px;top:1453.5px;font-size:23px;font-weight:bold;color:#3fe495;letter-spacing:.5px">61K</div>
<div class="a" style="left:2138.1px;top:1365px;width:141.5px;height:125px;border-radius:18px;border:2.5px solid #2c6956;background:#10221f"></div>
<div class="t" style="left:2154.6px;top:1380.6px;font-size:22px;color:#a9b2bb">10</div>
<div class="t" style="right:1009.9px;top:1453.5px;font-size:23px;font-weight:bold;color:#3fe495;letter-spacing:.5px">154.9K</div>
<div class="a" style="left:2295.3px;top:1365px;width:141.5px;height:125px;border-radius:18px;border:2.5px solid #2c6956;background:#10221f"></div>
<div class="t" style="left:2311.8px;top:1380.6px;font-size:22px;color:#a9b2bb">11</div>
<div class="t" style="right:852.7px;top:1453.5px;font-size:23px;font-weight:bold;color:#3fe495;letter-spacing:.5px">153.6K</div>
<div class="a" style="left:2452.5px;top:1365px;width:141.5px;height:125px;border-radius:18px;border:2.5px solid #2c6956;background:#10221f"></div>
<div class="t" style="left:2469.0px;top:1380.6px;font-size:22px;color:#a9b2bb">12</div>
<div class="t" style="right:695.5px;top:1453.5px;font-size:23px;font-weight:bold;color:#3fe495;letter-spacing:.5px">35.6K</div>
<div class="a" style="left:2608.7px;top:1364px;width:143.5px;height:127px;border-radius:19px;border:2px solid #161a23;background:#0c0f17"></div>
<div class="t" style="left:2626.2px;top:1380.6px;font-size:22px;color:#57272d">13</div>
<div class="a" style="left:1665.5px;top:1504px;width:143.5px;height:127px;border-radius:19px;border:2px solid #161a23;background:#0c0f17"></div>
<div class="t" style="left:1683.0px;top:1520.6px;font-size:22px;color:#57272d">14</div>
<div class="a" style="left:1823.7px;top:1505px;width:141.5px;height:125px;border-radius:18px;border:2.5px solid #2c6956;background:#10221f"></div>
<div class="t" style="left:1840.2px;top:1520.6px;font-size:22px;color:#a9b2bb">15</div>
<div class="t" style="right:1324.3px;top:1593.5px;font-size:23px;font-weight:bold;color:#3fe495;letter-spacing:.5px">113.3K</div>
<div class="a" style="left:1980.9px;top:1505px;width:141.5px;height:125px;border-radius:18px;border:2.5px solid #2c6956;background:#10221f"></div>
<div class="t" style="left:1997.4px;top:1520.6px;font-size:22px;color:#a9b2bb">16</div>
<div class="t" style="right:1167.1px;top:1593.5px;font-size:23px;font-weight:bold;color:#3fe495;letter-spacing:.5px">156K</div>
<div class="a" style="left:2138.1px;top:1505px;width:141.5px;height:125px;border-radius:18px;border:2.5px solid #2c6956;background:#10221f"></div>
<div class="t" style="left:2154.6px;top:1520.6px;font-size:22px;color:#a9b2bb">17</div>
<div class="t" style="right:1009.9px;top:1593.5px;font-size:23px;font-weight:bold;color:#3fe495;letter-spacing:.5px">60.8K</div>
<div class="a" style="left:2295.3px;top:1505px;width:141.5px;height:125px;border-radius:18px;border:2.5px solid #2c6956;background:#10221f"></div>
<div class="t" style="left:2311.8px;top:1520.6px;font-size:22px;color:#a9b2bb">18</div>
<div class="t" style="right:852.7px;top:1593.5px;font-size:23px;font-weight:bold;color:#3fe495;letter-spacing:.5px">73.7K</div>
<div class="a" style="left:2452.5px;top:1505px;width:141.5px;height:125px;border-radius:18px;border:2.5px solid #2c6956;background:#10221f"></div>
<div class="t" style="left:2469.0px;top:1520.6px;font-size:22px;color:#a9b2bb">19</div>
<div class="t" style="right:695.5px;top:1593.5px;font-size:23px;font-weight:bold;color:#3fe495;letter-spacing:.5px">30.9K</div>
<div class="a" style="left:2608.7px;top:1504px;width:143.5px;height:127px;border-radius:19px;border:2px solid #161a23;background:#0c0f17"></div>
<div class="t" style="left:2626.2px;top:1520.6px;font-size:22px;color:#57272d">20</div>
<div class="a" style="left:1665.5px;top:1644px;width:143.5px;height:127px;border-radius:19px;border:2px solid #161a23;background:#0c0f17"></div>
<div class="t" style="left:1683.0px;top:1660.6px;font-size:22px;color:#57272d">21</div>
<div class="a" style="left:1823.7px;top:1645px;width:141.5px;height:125px;border-radius:18px;border:2.5px solid #2c6956;background:#10221f"></div>
<div class="t" style="left:1840.2px;top:1660.6px;font-size:22px;color:#a9b2bb">22</div>
<div class="t" style="right:1324.3px;top:1733.5px;font-size:23px;font-weight:bold;color:#3fe495;letter-spacing:.5px">57.3K</div>
<div class="a" style="left:1980.9px;top:1645px;width:141.5px;height:125px;border-radius:18px;border:2.5px solid #2c6956;background:#10221f"></div>
<div class="t" style="left:1997.4px;top:1660.6px;font-size:22px;color:#a9b2bb">23</div>
<div class="t" style="right:1167.1px;top:1733.5px;font-size:23px;font-weight:bold;color:#3fe495;letter-spacing:.5px">36.8K</div>
<div class="a" style="left:2138.1px;top:1645px;width:141.5px;height:125px;border-radius:18px;border:2.5px solid #2c6956;background:#10221f"></div>
<div class="t" style="left:2154.6px;top:1660.6px;font-size:22px;color:#a9b2bb">24</div>
<div class="t" style="right:1009.9px;top:1733.5px;font-size:23px;font-weight:bold;color:#3fe495;letter-spacing:.5px">1.4K</div>
<div class="a" style="left:2294.3px;top:1644px;width:143.5px;height:127px;border-radius:19px;border:2px solid #161a23;background:#0c0f17"></div>
<div class="t" style="left:2311.8px;top:1660.6px;font-size:22px;color:#3a3e48">25</div>
<div class="a" style="left:2451.5px;top:1644px;width:143.5px;height:127px;border-radius:19px;border:2px solid #161a23;background:#0c0f17"></div>
<div class="t" style="left:2469.0px;top:1660.6px;font-size:22px;color:#3a3e48">26</div>
<div class="a" style="left:2608.7px;top:1644px;width:143.5px;height:127px;border-radius:19px;border:2px solid #161a23;background:#0c0f17"></div>
<div class="t" style="left:2626.2px;top:1660.6px;font-size:22px;color:#57272d">27</div>
<div class="a" style="left:1665.5px;top:1784px;width:143.5px;height:127px;border-radius:19px;border:2px solid #161a23;background:#0c0f17"></div>
<div class="t" style="left:1683.0px;top:1800.6px;font-size:22px;color:#57272d">28</div>
<div class="a" style="left:1822.7px;top:1784px;width:143.5px;height:127px;border-radius:19px;border:2px solid #161a23;background:#0c0f17"></div>
<div class="t" style="left:1840.2px;top:1800.6px;font-size:22px;color:#3a3e48">29</div>
<div class="a" style="left:1979.9px;top:1784px;width:143.5px;height:127px;border-radius:19px;border:2px solid #161a23;background:#0c0f17"></div>
<div class="t" style="left:1997.4px;top:1800.6px;font-size:22px;color:#3a3e48">30</div>
<div class="a" style="left:2137.1px;top:1784px;width:143.5px;height:127px;border-radius:19px;border:2px solid #161a23;background:#0c0f17"></div>
<div class="t" style="left:2154.6px;top:1800.6px;font-size:22px;color:#3a3e48">31</div>
</div></div>
<div class="a" style="left:3144px;top:901px;width:12px;height:1082px;border-radius:6px 6px 0 0;background:#303338"></div>
<div class="a" style="left:153px;top:1873px;width:69px;height:69px;border-radius:50%;background:#030303;border:2px solid #1f1d1b;box-shadow:0 0 8px rgba(0,0,0,.6)"></div>
<svg class="a" style="left:175px;top:1896px" width="26" height="26" viewBox="0 0 26 26"><defs><linearGradient id="ng" x1="0" y1="0" x2="0" y2="1"><stop offset=".55" stop-color="#fff"/><stop offset="1" stop-color="#fff" stop-opacity="0"/></linearGradient></defs><path d="M2 2 H5 V22 H2 Z" fill="#fff"/><path d="M2 2 H5.5 L24 24 H20.5 Z" fill="url(#ng)"/><path d="M20 2 H23 V15 H20 Z" fill="url(#ng)"/></svg><!--/PAGE-->
</div></div>
</body></html>
